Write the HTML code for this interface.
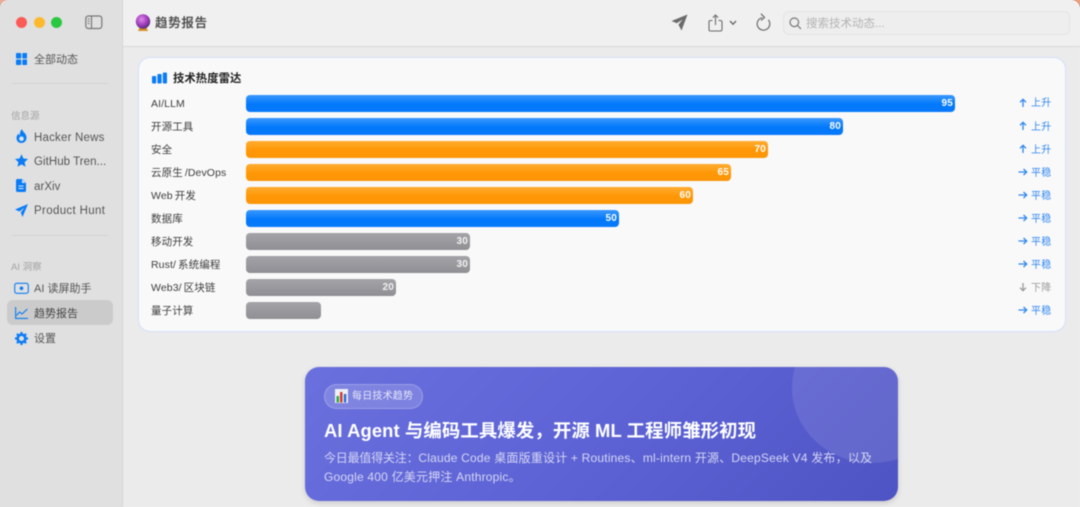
<!DOCTYPE html>
<html lang="zh-CN">
<head>
<meta charset="utf-8">
<style>
*{box-sizing:border-box;margin:0;padding:0}
html,body{width:1080px;height:507px;overflow:hidden;font-family:"Liberation Sans","Noto Sans CJK SC",sans-serif}
body{background:linear-gradient(90deg,#e0e0e0 123px,#f0f0f0 123px)}
#win{position:absolute;left:0;top:0;width:1080px;height:507px;background:#ebebeb;overflow:hidden;filter:blur(.45px)}
.a{position:absolute;white-space:nowrap}
#side{left:0;top:0;width:123px;height:507px;background:#e0e0e0;border-right:1px solid #d6d6d6}
#top{left:123px;top:0;width:957px;height:47px;background:#f0f0f0;border-bottom:1px solid #d9d9d9}
.dot{width:11px;height:11px;border-radius:50%;top:17px}
.nav{left:34px;font-size:11.5px;color:#555;line-height:16px;letter-spacing:.2px}
.cn{font-size:11px;letter-spacing:0}
.sec{left:11px;font-size:9.5px;color:#a3a3a3;line-height:12px}
.sep{left:12px;width:96px;height:1px;background:#d2d2d2}
.ic{position:absolute}
#card{left:138px;top:57px;width:928px;height:275px;background:#f9f9f9;border:1px solid #d2e0fa;border-radius:12px}
.l{left:151px;font-size:10.5px;color:#3d3d3d;line-height:14px;letter-spacing:.1px;word-spacing:-1px}
.b{left:246px;height:16.5px;border-radius:4px;color:#fff;font-size:10px;font-weight:700;line-height:18px;text-align:right;padding-right:2px;letter-spacing:.2px}
.bl{background:linear-gradient(#3b98fd,#0078fb 55%,#0a7afa)}
.or{background:linear-gradient(#ffac30,#ff9705 55%,#fc9508)}
.gr{background:linear-gradient(#a3a3a8,#8f8f94);color:#f2f2f2}
.t{left:1031px;font-size:10px;line-height:14px;color:#2f86f0;letter-spacing:.2px}
.ar{position:absolute;left:1018px;width:10px;height:10px}
#hero{left:305px;top:367px;width:593px;height:134px;border-radius:14px;overflow:hidden;background:linear-gradient(135deg,#6a70dd,#5d63d5 50%,#4f54c4);box-shadow:0 2px 6px rgba(0,0,0,.14)}
#cnr{position:absolute;left:0;top:0}
</style>
</head>
<body>
<div id="win">
<div class="a" id="side"></div>
<div class="a dot" style="left:16px;background:#fb5a56"></div>
<div class="a dot" style="left:33.5px;background:#fdb92e"></div>
<div class="a dot" style="left:51px;background:#2ac840"></div>
<svg class="ic" style="left:85px;top:15px" width="18" height="15" viewBox="0 0 18 15" fill="none" stroke="#777" stroke-width="1.2"><rect x=".8" y="1" width="16" height="12.5" rx="2.5"/><path d="M6.5 1v12.5"/><path d="M2.6 4h2M2.6 6.3h2M2.6 8.6h2" stroke-width="1"/></svg>

<svg class="ic" style="left:15.500px;top:53px" width="11.500" height="12" viewBox="0 0 11.500 12" fill="#0a7cf6"><rect width="5.200" height="5.500" rx=".8"/><rect x="6.300" width="5.200" height="5.500" rx=".8"/><rect y="6.500" width="5.200" height="5.500" rx=".8"/><rect x="6.300" y="6.500" width="5.200" height="5.500" rx=".8"/></svg>
<div class="a nav cn" style="top:52px">全部动态</div>
<div class="a sep" style="top:83px"></div>
<div class="a sec" style="top:111px">信息源</div>

<svg class="ic" style="left:16px;top:129px" width="11" height="14" viewBox="0 0 11 14"><path fill="#0a7cf6" d="M5.800 0C6.300 2.400 10.500 4.600 10.500 8.600 10.500 11.800 8.300 14 5.400 14 2.500 14 .5 11.900 .5 9 .5 6.900 1.600 5.500 2.500 4.500 2.700 5.500 3 6.100 3.700 6.500 3.600 4 4.500 1.700 5.800 0Z"/><circle cx="5.500" cy="9.700" r="2.300" fill="#dfe6ee"/></svg>
<div class="a nav" style="top:130px">Hacker News</div>
<svg class="ic" style="left:15px;top:154px" width="13" height="13" viewBox="0 0 13 13"><path fill="#0a7cf6" d="M6.500 .3 8.400 4.500 13 5 9.600 8.100 10.500 12.700 6.500 10.400 2.500 12.700 3.400 8.100 0 5 4.600 4.500Z"/></svg>
<div class="a nav" style="top:154px;letter-spacing:.05px">GitHub Tren...</div>
<svg class="ic" style="left:16px;top:179px" width="10" height="13" viewBox="0 0 10 13"><path fill="#0a7cf6" d="M1.500 0H6L10 4V11.500A1.500 1.500 0 0 1 8.500 13H1.500A1.500 1.500 0 0 1 0 11.500V1.500A1.500 1.500 0 0 1 1.500 0Z"/><path stroke="#dfe6ee" stroke-width="1" d="M2.500 7H7.500M2.500 9.500H7.500"/><path fill="#cfe2fa" d="M6 .5V4H9.500Z"/></svg>
<div class="a nav" style="top:179px;letter-spacing:.05px">arXiv</div>
<svg class="ic" style="left:15px;top:204px" width="13" height="13" viewBox="0 0 13 13"><path fill="#0a7cf6" d="M13 0 0 5.500 4.500 7.500 9.500 3.500 5.800 8.500 7.500 13Z"/></svg>
<div class="a nav" style="top:203px;letter-spacing:.35px">Product Hunt</div>
<div class="a sep" style="top:235px"></div>
<div class="a sec" style="top:262px">AI 洞察</div>

<svg class="ic" style="left:14px;top:282px" width="15" height="13" viewBox="0 0 15 13" fill="none" stroke="#0a7cf6" stroke-width="1.100"><rect x=".7" y="1.300" width="13.600" height="10" rx="2"/><circle cx="7.500" cy="6.300" r="1.800" fill="#0a7cf6" stroke="none"/></svg>
<div class="a nav cn" style="top:281px">AI 读屏助手</div>
<div class="a" style="left:7px;top:300px;width:106px;height:25px;background:#cbcbcb;border-radius:6px"></div>
<svg class="ic" style="left:15px;top:307px" width="13" height="12" viewBox="0 0 13 12" fill="none" stroke="#0a7cf6" stroke-width="1.100"><path d="M.6 0V11.400H13"/><path d="M1.500 8.500 4.500 5 7 7 12.400 2"/></svg>
<div class="a nav cn" style="top:306px;color:#444">趋势报告</div>
<svg class="ic" style="left:15px;top:332px" width="13" height="13" viewBox="0 0 13 13"><circle cx="6.500" cy="6.500" r="3.800" fill="none" stroke="#0a7cf6" stroke-width="2.600"/><path stroke="#0a7cf6" stroke-width="2.200" d="M6.500 0V2.500M6.500 10.500V13M0 6.500H2.500M10.500 6.500H13M1.900 1.900 3.600 3.600M9.400 9.400 11.100 11.100M11.100 1.900 9.400 3.600M3.600 9.400 1.900 11.100"/></svg>
<div class="a nav cn" style="top:331px">设置</div>

<div class="a" id="top"></div>
<svg class="ic" style="left:135px;top:14px" width="16" height="18" viewBox="0 0 16 18"><defs><radialGradient id="g" cx=".4" cy=".35" r=".7"><stop offset="0" stop-color="#e088e8"/><stop offset=".55" stop-color="#a33fc0"/><stop offset="1" stop-color="#4d2a70"/></radialGradient></defs><path d="M4.500 13.500H11.500L13 17H3Z" fill="#d49025"/><circle cx="8" cy="7.500" r="7.200" fill="url(#g)"/></svg>
<div class="a" style="left:155px;top:14px;font-size:12.500px;font-weight:700;color:#555;line-height:18px;letter-spacing:.7px">趋势报告</div>

<svg class="ic" style="left:671px;top:14px" width="17" height="17" viewBox="0 0 17 17"><path fill="#6b6b6b" d="M16.500 .5 .5 7 5.800 9.200 11.500 5.500 7.500 10.800 10.500 16.500Z"/></svg>
<svg class="ic" style="left:708px;top:14px" width="16" height="18" viewBox="0 0 16 18" fill="none" stroke="#6b6b6b" stroke-width="1.100"><path d="M4.500 6.500H2.500A1.500 1.500 0 0 0 1 8V15.500A1.500 1.500 0 0 0 2.500 17H12.500A1.500 1.500 0 0 0 14 15.500V8A1.500 1.500 0 0 0 12.500 6.500H10.500"/><path d="M7.500 11V1.200M4.900 3.600 7.500 1 10.100 3.600"/></svg>
<svg class="ic" style="left:729px;top:20px" width="8" height="6" viewBox="0 0 8 6" fill="none" stroke="#6b6b6b" stroke-width="1.400"><path d="M1 1 4 4.200 7 1"/></svg>
<svg class="ic" style="left:756px;top:13px" width="15" height="18" viewBox="0 0 15 18" fill="none" stroke="#6b6b6b" stroke-width="1.200"><path d="M12.300 6.800A6.300 6.300 0 1 1 6.200 4.700"/><path d="M5 .8 8.500 4.400 5 7.400"/></svg>
<div class="a" style="left:783px;top:11px;width:287px;height:24px;background:#eeeeee;border:1px solid #e4e4e4;border-radius:6px"></div>
<svg class="ic" style="left:789px;top:17px" width="13" height="13" viewBox="0 0 13 13" fill="none" stroke="#777" stroke-width="1.200"><circle cx="5.300" cy="5.300" r="4.300"/><path d="M8.500 8.500 12 12"/></svg>
<div class="a" style="left:806px;top:16px;font-size:11.500px;color:#b3b3b3;line-height:16px">搜索技术动态...</div>

<div class="a" id="card"></div>
<svg class="ic" style="left:152px;top:72px" width="15" height="12" viewBox="0 0 15 12" fill="#0a7cf6"><rect y="4" width="4.200" height="7.500" rx="1"/><rect x="5.400" y="2" width="4.200" height="9.500" rx="1"/><rect x="10.800" y=".5" width="4.200" height="11" rx="1"/></svg>
<div class="a" style="left:173px;top:71px;font-size:11.300px;font-weight:700;color:#222;line-height:16px;letter-spacing:.1px">技术热度雷达</div>

<div class="a l" style="top:97px">AI/LLM</div>
<div class="a l" style="top:120px">开源工具</div>
<div class="a l" style="top:143px">安全</div>
<div class="a l" style="top:166px">云原生 /DevOps</div>
<div class="a l" style="top:189px">Web 开发</div>
<div class="a l" style="top:212px">数据库</div>
<div class="a l" style="top:235px">移动开发</div>
<div class="a l" style="top:258px">Rust/ 系统编程</div>
<div class="a l" style="top:281px">Web3/ 区块链</div>
<div class="a l" style="top:304px">量子计算</div>

<div class="a b bl" style="top:95px;width:709px">95</div>
<div class="a b bl" style="top:118px;width:597px">80</div>
<div class="a b or" style="top:141px;width:522px">70</div>
<div class="a b or" style="top:164px;width:485px">65</div>
<div class="a b or" style="top:187px;width:447px">60</div>
<div class="a b bl" style="top:210px;width:373px">50</div>
<div class="a b gr" style="top:233px;width:224px">30</div>
<div class="a b gr" style="top:256px;width:224px">30</div>
<div class="a b gr" style="top:279px;width:150px">20</div>
<div class="a b gr" style="top:302px;width:75px"></div>

<svg width="0" height="0" style="position:absolute"><defs>
<g id="u" fill="none" stroke-width="1.300"><path d="M5 9V1.500M2 4.300 5 1.300 8 4.300"/></g>
<g id="r" fill="none" stroke-width="1.300"><path d="M.5 5H8.500M5.500 2 8.700 5 5.500 8"/></g>
<g id="d" fill="none" stroke-width="1.300"><path d="M5 1V8.500M2 5.700 5 8.700 8 5.700"/></g>
</defs></svg>
<svg class="ar" style="top:98px" stroke="#2f86f0" viewBox="0 0 10 10"><use href="#u"/></svg><div class="a t" style="top:97px">上升</div>
<svg class="ar" style="top:121px" stroke="#2f86f0" viewBox="0 0 10 10"><use href="#u"/></svg><div class="a t" style="top:121px">上升</div>
<svg class="ar" style="top:144px" stroke="#2f86f0" viewBox="0 0 10 10"><use href="#u"/></svg><div class="a t" style="top:144px">上升</div>
<svg class="ar" style="top:167px" stroke="#2f86f0" viewBox="0 0 10 10"><use href="#r"/></svg><div class="a t" style="top:167px">平稳</div>
<svg class="ar" style="top:190px" stroke="#2f86f0" viewBox="0 0 10 10"><use href="#r"/></svg><div class="a t" style="top:190px">平稳</div>
<svg class="ar" style="top:213px" stroke="#2f86f0" viewBox="0 0 10 10"><use href="#r"/></svg><div class="a t" style="top:213px">平稳</div>
<svg class="ar" style="top:236px" stroke="#2f86f0" viewBox="0 0 10 10"><use href="#r"/></svg><div class="a t" style="top:236px">平稳</div>
<svg class="ar" style="top:259px" stroke="#2f86f0" viewBox="0 0 10 10"><use href="#r"/></svg><div class="a t" style="top:259px">平稳</div>
<svg class="ar" style="top:282px" stroke="#9a9a9a" viewBox="0 0 10 10"><use href="#d"/></svg><div class="a t" style="top:282px;color:#9a9a9a">下降</div>
<svg class="ar" style="top:305px" stroke="#2f86f0" viewBox="0 0 10 10"><use href="#r"/></svg><div class="a t" style="top:305px">平稳</div>

<div class="a" id="hero">
  <div class="a" style="left:487px;top:-54px;width:160px;height:150px;border-radius:50%;background:rgba(255,255,255,.1)"></div>
  <div class="a" style="left:19px;top:17px;width:99px;height:25px;border-radius:13px;background:rgba(255,255,255,.16);border:1px solid rgba(255,255,255,.22)"></div>
  <svg class="ic" style="left:30px;top:22px" width="13" height="14" viewBox="0 0 13 14"><rect width="13" height="14" fill="#eef0f6"/><rect x="1.500" y="7" width="2.500" height="6.500" fill="#2aa84a"/><rect x="5" y="3" width="2.500" height="10.500" fill="#d8382f"/><rect x="8.800" y="5" width="2.500" height="8.500" fill="#2c6fd0"/></svg>
  <div class="a" style="left:47px;top:23px;font-size:10px;color:#e6e7f8;line-height:14px;letter-spacing:.2px">每日技术趋势</div>
  <div class="a" style="left:19px;top:52px;font-size:18.400px;font-weight:700;color:#fff;line-height:24px;letter-spacing:.1px">AI Agent 与编码工具爆发，开源 ML 工程师雏形初现</div>
  <div class="a" style="left:19px;top:81.500px;font-size:12px;color:#d6d7f4;line-height:19px;letter-spacing:.2px"><span style="letter-spacing:-.2px">今日最值得关注：</span>Claude Code 桌面版重设计 + Routines、ml-intern 开源、DeepSeek V4 发布，以及<br>Google 400 亿美元押注 Anthropic。</div>
</div>
</div>
<svg id="cnr" width="1080" height="507" viewBox="0 0 1080 507"><path fill="#ecab98" d="M0 0H8A8 8 0 0 0 0 8Z"/><path fill="#e8a084" d="M1080 0H1071A9 9 0 0 1 1080 9Z"/></svg>
</body>
</html>
